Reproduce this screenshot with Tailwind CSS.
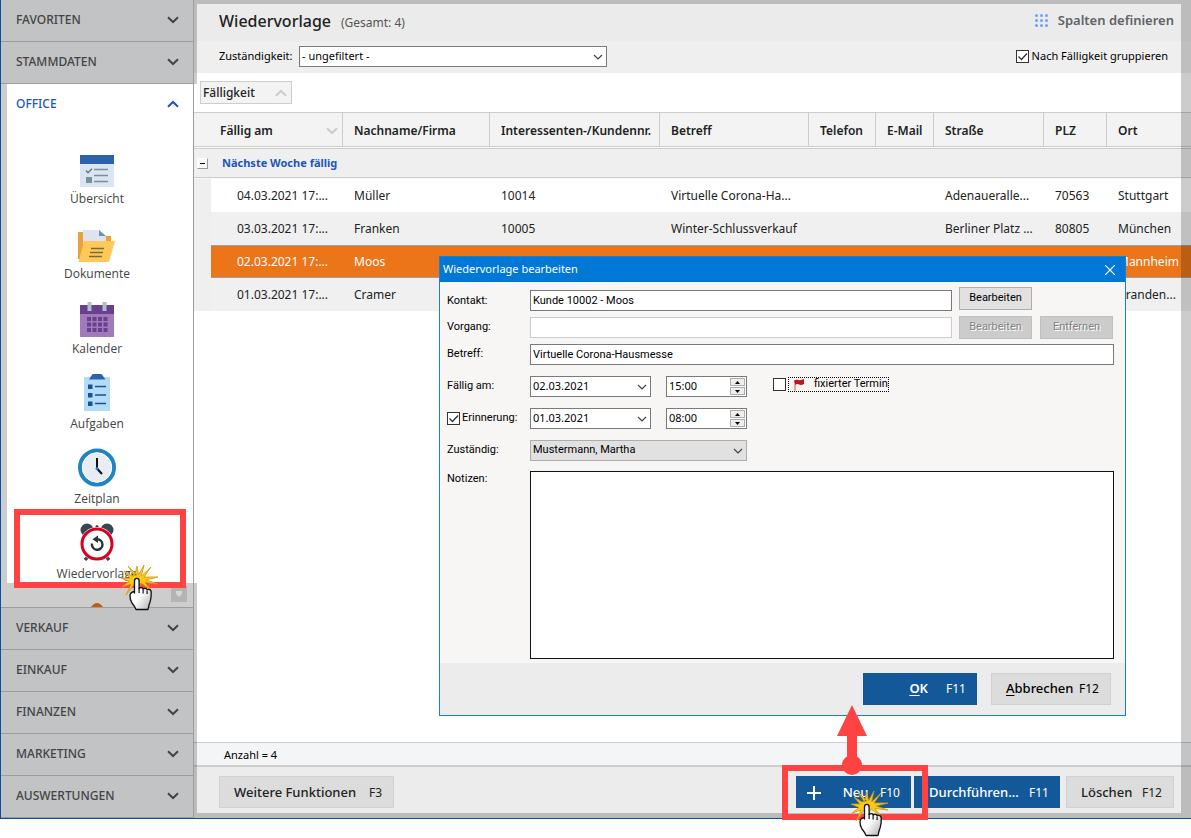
<!DOCTYPE html>
<html lang="de">
<head>
<meta charset="utf-8">
<title>Wiedervorlage</title>
<script src="https://cdn.jsdelivr.net/npm/@tailwindcss/browser@4"></script>
</head>
<body class="h-screen flex flex-col bg-white pb-[19px] overflow-hidden font-['Noto_Sans','Open_Sans',sans-serif] text-[13px] text-[#222]">

<svg class="absolute w-0 h-0" aria-hidden="true">
  <symbol id="down" viewBox="0 0 12 8"><path d="M1 1.2 6 6l5-4.8" fill="none" stroke="currentColor" stroke-width="2"/></symbol>
  <symbol id="up" viewBox="0 0 12 8"><path d="M1 6.8 6 2l5 4.8" fill="none" stroke="currentColor" stroke-width="2"/></symbol>
  <symbol id="thin" viewBox="0 0 10 6"><path d="M1 1l4 4 4-4" fill="none" stroke="currentColor" stroke-width="1.2"/></symbol>
  <symbol id="check" viewBox="0 0 13 13"><path d="M2.5 6.5l3 3 5.5-6" fill="none" stroke="#333" stroke-width="1.3"/></symbol>
  <symbol id="pointer" viewBox="0 0 40 48">
    <path d="M17 11 8 2 14.500 12 17 2 18.500 11 24 1 21.500 12 31 3 24 13 38 13 26 16 38 20 25 18.500 31 26 21 19 18 26 15 19 6 31 11 20 2 23 9 17.500 1 14 10 14 4 7 12 12z" fill="#f8c81c" stroke="#d09a0a" stroke-width=".8"/>
    <path d="M14.500 29V17q0-2.600 2.300-2.600t2.300 2.600v7.600q.3-1 2-1 2 0 2 1.700.4-1 2-1 2 0 2 1.800.3-.8 1.700-.8 2.200 0 2.400 2.600.3 6-1 9.600-1.300 3.300-2.200 8h-12q-1.500-3.500-4-6.500-2.200-3.500-2-7.500.4-3.500 4.500-4z" fill="url(#hand)" stroke="#111" stroke-width="1.300" stroke-linejoin="round"/>
    <path d="M19.100 24v5M23.100 25.500v4M27.100 27v3" stroke="#111" stroke-width="1.200"/>
  </symbol>
  <defs><linearGradient id="hand" x2="1" y2="1"><stop offset=".5" stop-color="#fff"/><stop offset="1" stop-color="#b0b0b0"/></linearGradient></defs>
</svg>

<div class="relative flex flex-1 min-h-0 border-l border-b border-[#0b4ea2]">

  <!-- Navigation -->
  <nav class="w-[193px] shrink-0 flex flex-col border-r border-[#9d9d9d] bg-[#cdcdcd] text-[12px] font-medium text-[#444]">
    <button class="h-[42px] shrink-0 flex items-center justify-between pl-[15px] pr-[14px] pb-[2px] bg-[#c1c3c4] border-b border-[#9b9c9d]">FAVORITEN<svg class="w-3 h-2"><use href="#down"/></svg></button>
    <button class="h-[42px] shrink-0 flex items-center justify-between pl-[15px] pr-[14px] pb-[2px] bg-[#c1c3c4] border-b border-[#9b9c9d]">STAMMDATEN<svg class="w-3 h-2"><use href="#down"/></svg></button>
    <div class="ml-[6px] bg-white shrink-0">
      <button class="w-full h-[39px] flex items-center justify-between pl-[9px] pr-[14px] text-[#1c57b8]">OFFICE<svg class="w-3 h-2"><use href="#up"/></svg></button>
      <div class="pt-[25px] pr-[6px] flex flex-col gap-[13px] font-['Open_Sans','Noto_Sans',sans-serif] font-normal">
        <a href="#" class="flex flex-col items-center">
          <svg class="w-10 h-10" viewBox="0 0 40 40"><path d="M3 7h34v32H3z" fill="#dbe5f1"/><path d="M3 7h34v9H3z" fill="#2b62ab"/><path d="M17 21.500h14M17 27.500h14M17 33.500h14" stroke="#78909c" stroke-width="1.500"/><path d="M9 22.500l2 2.200 4-4" stroke="#607d8b" stroke-width="1.500" fill="none"/><path d="M9 29h6v6H9z" fill="#78909c"/></svg>
          <span class="leading-[22px]">Übersicht</span></a>
        <a href="#" class="flex flex-col items-center">
          <svg class="w-10 h-10" viewBox="0 0 40 40"><path d="M1 9h6v-1h2v28H1zM22 13h12v8H22z" fill="#e9a13b"/><path d="M6 7h16l7 7v10H6z" fill="#dce4f1"/><path d="M22 7l7 6h-7z" fill="#78909c"/><path d="M7 18h31l-6 21H1.500z" fill="#ffc857"/><path d="M14 25.500h13M13 29.500h13M12 33.500h13" stroke="#7a6a3c" stroke-width="1.300"/></svg>
          <span class="leading-[22px]">Dokumente</span></a>
        <a href="#" class="flex flex-col items-center">
          <svg class="w-10 h-10" viewBox="0 0 40 40"><path d="M3 7h34v32H3z" fill="#9f7bb9"/><path d="M3 7h34v9H3z" fill="#6b3f90"/><path d="M10.500 4h4v9h-4zM25.500 4h4v9h-4z" fill="#b0bec5"/><path d="M10 19h4v4h-4zM15.500 19h4v4h-4zM21 19h4v4h-4zM26.500 19h4v4h-4zM10 24.500h4v4h-4zM15.500 24.500h4v4h-4zM21 24.500h4v4h-4zM26.500 24.500h4v4h-4zM10 30h4v4h-4zM15.500 30h4v4h-4zM21 30h4v4h-4zM26.500 30h4v4h-4z" fill="#6b3f90"/></svg>
          <span class="leading-[22px]">Kalender</span></a>
        <a href="#" class="flex flex-col items-center">
          <svg class="w-10 h-10" viewBox="0 0 40 40"><path d="M7 4h26v34H7z" fill="#b3dcf6"/><path d="M12 6.500 15.500 1h9L28.500 6.500z" fill="#2b62ab"/><path d="M11 11.500h4.500V16H11zM11 20h4.500v4.500H11zM11 28.500h4.500V33H11z" fill="#1c4f98"/><path d="M18 13.500h11M18 22h11M18 30.500h11" stroke="#1c4f98" stroke-width="1.500"/></svg>
          <span class="leading-[22px]">Aufgaben</span></a>
        <a href="#" class="flex flex-col items-center">
          <svg class="w-10 h-10" viewBox="0 0 40 40"><circle cx="20" cy="19.500" r="17" fill="#e8edf4" stroke="#1f83c6" stroke-width="4"/><circle cx="20" cy="19.500" r="14.700" fill="none" stroke="#fff" stroke-width="1"/><path d="M20 10v10.500l5 5.500" fill="none" stroke="#111" stroke-width="2"/><circle cx="20" cy="20.500" r="1.500" fill="#1f83c6"/></svg>
          <span class="leading-[22px]">Zeitplan</span></a>
        <a href="#" class="h-15 flex flex-col items-center">
          <svg class="w-10 h-10 shrink-0" viewBox="0 0 40 40"><path d="M8 37l5-6M32 37l-5-6" stroke="#37474f" stroke-width="3.500"/><circle cx="10" cy="7" r="6.500" fill="#37474f"/><circle cx="30" cy="7" r="6.500" fill="#37474f"/><circle cx="20" cy="3.500" r="1.500" fill="#37474f"/><circle cx="20" cy="21" r="17" fill="#fff"/><circle cx="20" cy="21" r="15" fill="#fff" stroke="#d8001f" stroke-width="3"/><path d="M15 20.500a5.300 5.300 0 1 0 5-4.300" fill="none" stroke="#263238" stroke-width="2.400"/><path d="M21 12.500v7.500l-5.500-3.800z" fill="#263238"/></svg>
          <span class="leading-[22px]">Wiedervorlage</span></a>
      </div>
    </div>
    <div class="relative flex-1 min-h-6 overflow-hidden border-b border-[#9b9c9d]">
      <svg class="absolute left-[90px] bottom-0 w-3 h-1" viewBox="0 0 12 4"><path d="M0 4Q3 0 6 0t6 4z" fill="#c45e00"/></svg>
      <button aria-label="Nach unten" class="absolute right-[6px] top-[3px] w-4 h-4 bg-[#b4b4b4] grid place-items-center"><svg class="w-2 h-2" viewBox="0 0 8 8"><path d="M1 1h6v3L4 7 1 4z" fill="#d6d6d6"/></svg></button>
    </div>
    <button class="h-[42px] shrink-0 flex items-center justify-between pl-[15px] pr-[14px] pb-[2px] bg-[#c1c3c4] border-b border-[#9b9c9d]">VERKAUF<svg class="w-3 h-2"><use href="#down"/></svg></button>
    <button class="h-[42px] shrink-0 flex items-center justify-between pl-[15px] pr-[14px] pb-[2px] bg-[#c1c3c4] border-b border-[#9b9c9d]">EINKAUF<svg class="w-3 h-2"><use href="#down"/></svg></button>
    <button class="h-[42px] shrink-0 flex items-center justify-between pl-[15px] pr-[14px] pb-[2px] bg-[#c1c3c4] border-b border-[#9b9c9d]">FINANZEN<svg class="w-3 h-2"><use href="#down"/></svg></button>
    <button class="h-[42px] shrink-0 flex items-center justify-between pl-[15px] pr-[14px] pb-[2px] bg-[#c1c3c4] border-b border-[#9b9c9d]">MARKETING<svg class="w-3 h-2"><use href="#down"/></svg></button>
    <button class="h-[42px] shrink-0 flex items-center justify-between pl-[15px] pr-[14px] pb-[2px] bg-[#c1c3c4] border-b border-[#9b9c9d]">AUSWERTUNGEN<svg class="w-3 h-2"><use href="#down"/></svg></button>
  </nav>

  <!-- List view -->
  <main class="relative flex-1 min-w-0 flex flex-col">
    <header class="h-[41px] flex items-center justify-between pl-[25px] pr-[17px] bg-[#ebebeb]">
      <h1 class="flex items-baseline gap-2.5 text-[16px] font-medium">Wiedervorlage <span class="text-[12px] font-normal text-[#555]">(Gesamt: 4)</span></h1>
      <button class="flex items-center gap-2.5 font-semibold text-[#5f6368]">
        <svg class="w-[13px] h-[13px]" viewBox="0 0 13 13" fill="#69a2f8"><circle cx="1.500" cy="1.500" r="1.500"/><circle cx="6.500" cy="1.500" r="1.500"/><circle cx="11.500" cy="1.500" r="1.500"/><circle cx="1.500" cy="6.500" r="1.500"/><circle cx="6.500" cy="6.500" r="1.500"/><circle cx="11.500" cy="6.500" r="1.500"/><circle cx="1.500" cy="11.500" r="1.500"/><circle cx="6.500" cy="11.500" r="1.500"/><circle cx="11.500" cy="11.500" r="1.500"/></svg>
        Spalten definieren</button>
    </header>
    <div class="h-8 flex items-center pl-[25px] pr-[23px] pb-[2px] bg-[#efefef] text-[11px] text-black">
      <label for="resp" class="w-20">Zuständigkeit:</label>
      <div class="relative w-[308px]">
        <select id="resp" class="block appearance-none w-full h-[21px] pl-[2px] bg-white border border-[#7a7a7a]"><option>- ungefiltert -</option></select>
        <svg class="absolute right-1 top-2 w-[10px] h-[6px] pointer-events-none text-[#444]"><use href="#thin"/></svg>
      </div>
      <label class="ml-auto flex items-center gap-[3px]"><span class="relative"><input type="checkbox" checked class="block appearance-none w-[13px] h-[13px] bg-white border border-[#333]"><svg class="absolute inset-0 w-[13px] h-[13px] pointer-events-none"><use href="#check"/></svg></span>Nach Fälligkeit gruppieren</label>
    </div>
    <div class="h-[39px] flex items-center pl-[6px]">
      <button class="w-[92px] h-[23px] flex items-center justify-between pl-[2px] pr-1 bg-[#f3f3f3] border border-[#cdcdcd] font-medium text-[12px]">Fälligkeit<svg class="w-3 h-2 text-[#ccc]"><use href="#up"/></svg></button>
    </div>
    <div class="flex-1 min-h-0 overflow-hidden">
      <table class="w-full table-fixed border-separate border-spacing-0 text-left text-[12px] whitespace-nowrap">
        <colgroup><col class="w-[17px]"><col class="w-[132px]"><col class="w-[147px]"><col class="w-[170px]"><col class="w-[149px]"><col class="w-[67px]"><col class="w-[58px]"><col class="w-[110px]"><col class="w-[63px]"><col></colgroup>
        <thead><tr class="h-[35px] *:pb-0 *:pt-[2px] *:pr-0 *:pl-[11px] *:font-semibold *:bg-[#f3f3f3] *:border-y *:border-[#cdcdcd]">
          <th colspan="2" class="border-r"><div class="flex items-center justify-between pl-[15px] pr-1">Fällig am<svg class="w-3 h-2 text-[#ccc]"><use href="#down"/></svg></div></th>
          <th class="border-r">Nachname/Firma</th><th class="border-r">Interessenten-/Kundennr.</th><th class="border-r">Betreff</th><th class="border-r">Telefon</th><th class="border-r">E-Mail</th><th class="border-r">Straße</th><th class="border-r">PLZ</th><th>Ort</th>
        </tr></thead>
        <tbody>
          <tr><td colspan="10" class="p-0 py-px bg-[#f8f8f8]"><div class="h-[30px] flex items-center gap-[14px] pl-[3px] bg-[#efefef] border-y border-[#cdcdcd] text-[11px] font-bold text-[#1c57b8]"><button aria-label="Gruppe zuklappen" class="w-[11px] h-[11px] bg-[#f8f8f8] border border-white border-r-[#999] border-b-[#999] grid place-items-center"><span class="w-[5px] h-px bg-black"></span></button>Nächste Woche fällig</div></td></tr>
          <tr class="h-[33px] *:py-0 *:pr-0 *:pl-[11px]"><td class="bg-[#efefef]"></td><td><span class="pl-[15px]">04.03.2021 17:...</span></td><td>Müller</td><td>10014</td><td>Virtuelle Corona-Ha...</td><td></td><td></td><td>Adenaueralle...</td><td>70563</td><td>Stuttgart</td></tr>
          <tr class="h-[33px] bg-[#f0f0f0] *:py-0 *:pr-0 *:pl-[11px]"><td class="bg-[#efefef]"></td><td><span class="pl-[15px]">03.03.2021 17:...</span></td><td>Franken</td><td>10005</td><td>Winter-Schlussverkauf</td><td></td><td></td><td>Berliner Platz ...</td><td>80805</td><td>München</td></tr>
          <tr class="h-[33px] text-white *:py-0 *:pr-0 *:pl-[11px]"><td class="bg-[#efefef]"></td><td class="bg-[#ec751a] border-y border-[#9aa0a6]"><span class="pl-[15px]">02.03.2021 17:...</span></td><td class="bg-[#ec751a] border-y border-[#9aa0a6]">Moos</td><td class="bg-[#ec751a] border-y border-[#9aa0a6]"></td><td class="bg-[#ec751a] border-y border-[#9aa0a6]"></td><td class="bg-[#ec751a] border-y border-[#9aa0a6]"></td><td class="bg-[#ec751a] border-y border-[#9aa0a6]"></td><td class="bg-[#ec751a] border-y border-[#9aa0a6]"></td><td class="bg-[#ec751a] border-y border-[#9aa0a6]"></td><td class="bg-[#ec751a] border-y border-[#9aa0a6]">Mannheim</td></tr>
          <tr class="h-[33px] bg-[#f0f0f0] *:py-0 *:pr-0 *:pl-[11px]"><td class="bg-[#efefef]"></td><td><span class="pl-[15px]">01.03.2021 17:...</span></td><td>Cramer</td><td></td><td></td><td></td><td></td><td></td><td></td><td>Branden...</td></tr>
        </tbody>
      </table>
    </div>
    <div class="h-[25px] flex items-center pt-[2px] pl-[30px] bg-[#f4f5f7] border-t border-b-2 border-[#cdcdcd] text-[11px] text-black">Anzahl = 4</div>
    <footer class="h-[51px] flex items-start pt-[9px] pl-[25px] pr-[17px] bg-[#ececec] font-medium">
      <button class="w-[175px] h-8 flex items-center justify-between pt-[2px] pl-[14px] pr-[11px] bg-[#dcdcdc] border border-[#d0d0d0]">Weitere Funktionen <span class="text-[12px] font-normal">F3</span></button>
      <button class="ml-auto w-[115px] h-8 flex items-center justify-between pt-[2px] px-[11px] bg-[#135899] text-white"><svg class="w-[14px] h-[14px] mr-[10px]" viewBox="0 0 14 14"><path d="M7 0v14M0 7h14" stroke="#fff" stroke-width="2"/></svg>Neu <span class="text-[12px] font-normal">F10</span></button>
      <button class="ml-[3px] w-[146px] h-8 flex items-center justify-between pt-[2px] pl-[15px] pr-[11px] bg-[#135899] text-white">Durchführen... <span class="text-[12px] font-normal">F11</span></button>
      <button class="ml-[6px] w-[108px] h-8 flex items-center justify-between pt-[2px] pl-[14px] pr-[11px] bg-[#dcdcdc] border border-[#d0d0d0]">Löschen <span class="text-[12px] font-normal">F12</span></button>
    </footer>

    <!-- Shaded frame around the highlighted areas -->
    <div class="absolute top-0 left-0 right-[10px] h-1 bg-black/20 pointer-events-none"></div>
    <div class="absolute top-0 right-0 bottom-0 w-[10px] bg-black/20 pointer-events-none"></div>
    <div class="absolute bottom-0 left-0 right-[10px] h-[5px] bg-black/20 pointer-events-none"></div>
    <div class="absolute top-1 left-0 w-[3px] h-20 bg-black/20 pointer-events-none"></div>
    <div class="absolute top-[583px] left-0 w-[3px] bottom-[5px] bg-black/20 pointer-events-none"></div>
  </main>

  <!-- Edit dialog -->
  <section role="dialog" aria-labelledby="dlg" class="absolute left-[438px] right-[65px] top-[256px] border border-[#1a7fd6] bg-[#f7f6f4] text-[11px] text-black">
    <div class="h-[25px] flex items-center justify-between pl-[3px] pr-2.5 bg-[#0078d7] text-white">
      <h2 id="dlg" class="text-[11px]">Wiedervorlage bearbeiten</h2>
      <button aria-label="Schließen"><svg class="w-[10px] h-[10px]" viewBox="0 0 10 10"><path d="M0 0l10 10M10 0 0 10" stroke="#fff" stroke-width="1.200"/></svg></button>
    </div>
    <form class="pt-[5px] pb-1 pl-[7px] pr-[11px] flex flex-col font-['Roboto','Noto_Sans',sans-serif]">
      <div class="flex flex-col gap-[6px]">
        <div class="h-6 flex items-end"><label for="kontakt" class="w-[83px] leading-[21px]">Kontakt:</label><input id="kontakt" value="Kunde 10002 - Moos" class="flex-1 min-w-0 h-[21px] px-[2px] bg-white border border-[#7a7a7a]"><div class="self-start ml-[7px] w-[155px] flex"><button type="button" class="w-[73px] h-[23px] bg-[#e1e1e1] border border-[#adadad]">Bearbeiten</button></div></div>
        <div class="h-[21px] flex items-center"><label for="vorgang" class="w-[83px]">Vorgang:</label><input id="vorgang" disabled class="flex-1 min-w-0 h-[21px] px-[2px] bg-white border border-[#ccc]"><div class="ml-[7px] w-[155px] flex gap-2 text-[#838383]"><button type="button" disabled class="w-[73px] h-[23px] bg-[#ccc] border border-[#bfbfbf] [text-shadow:1px_1px_0_white]">Bearbeiten</button><button type="button" disabled class="w-[73px] h-[23px] bg-[#ccc] border border-[#bfbfbf] [text-shadow:1px_1px_0_white]">Entfernen</button></div></div>
        <div class="h-[21px] flex items-center"><label for="betreff" class="w-[83px]">Betreff:</label><input id="betreff" value="Virtuelle Corona-Hausmesse" class="flex-1 min-w-0 h-[21px] px-[2px] bg-white border border-[#7a7a7a]"></div>
      </div>
      <div class="mt-[11px] flex flex-col gap-[11px]">
        <div class="h-[21px] flex items-center">
          <label for="faellig" class="w-[83px]">Fällig am:</label>
          <div class="w-[121px] h-[21px] flex items-center pr-[3px] bg-white border border-[#7a7a7a]"><input id="faellig" value="02.03.2021" class="flex-1 min-w-0 px-[2px] font-['Noto_Sans',sans-serif]"><button type="button" aria-label="Kalender öffnen"><svg class="w-[10px] h-[6px] text-[#444]"><use href="#thin"/></svg></button></div>
          <div class="ml-[15px] w-[81px] h-[21px] flex items-center pr-px bg-white border border-[#7a7a7a]"><input aria-label="Uhrzeit" value="15:00" class="flex-1 min-w-0 px-[2px] font-['Noto_Sans',sans-serif]"><div class="flex flex-col gap-px"><button type="button" aria-label="Später" class="w-[15px] h-2 grid place-items-center bg-[#eee] border border-[#adadad]"><svg class="w-[5px] h-[3px]" viewBox="0 0 5 3"><path d="M0 3l2.500-3L5 3z"/></svg></button><button type="button" aria-label="Früher" class="w-[15px] h-2 grid place-items-center bg-[#eee] border border-[#adadad]"><svg class="w-[5px] h-[3px]" viewBox="0 0 5 3"><path d="M0 0l2.500 3L5 0z"/></svg></button></div></div>
          <label class="ml-[26px] flex items-center gap-[2px] pb-1"><input type="checkbox" class="block appearance-none w-[13px] h-[13px] bg-white border border-[#333]"><span class="h-[15px] flex items-center gap-[10px] pl-[5px] border border-dotted border-black"><svg class="w-[10px] h-3" viewBox="0 0 10 12"><path d="M1 1.500V12" stroke="#e58a90" stroke-width="1.500"/><path d="M0 1.500Q2 .5 4.500 1T10 0v5Q7 6.500 5 5.500T1.500 6z" fill="#c4131f"/></svg>fixierter Termin</span></label>
        </div>
        <div class="h-[21px] flex items-center">
          <label class="w-[83px] flex items-center gap-[2px]"><span class="relative"><input type="checkbox" checked class="block appearance-none w-[13px] h-[13px] bg-white border border-[#333]"><svg class="absolute inset-0 w-[13px] h-[13px] pointer-events-none"><use href="#check"/></svg></span>Erinnerung:</label>
          <div class="w-[121px] h-[21px] flex items-center pr-[3px] bg-white border border-[#7a7a7a]"><input aria-label="Erinnerungsdatum" value="01.03.2021" class="flex-1 min-w-0 px-[2px] font-['Noto_Sans',sans-serif]"><button type="button" aria-label="Kalender öffnen"><svg class="w-[10px] h-[6px] text-[#444]"><use href="#thin"/></svg></button></div>
          <div class="ml-[15px] w-[81px] h-[21px] flex items-center pr-px bg-white border border-[#7a7a7a]"><input aria-label="Erinnerungszeit" value="08:00" class="flex-1 min-w-0 px-[2px] font-['Noto_Sans',sans-serif]"><div class="flex flex-col gap-px"><button type="button" aria-label="Später" class="w-[15px] h-2 grid place-items-center bg-[#eee] border border-[#adadad]"><svg class="w-[5px] h-[3px]" viewBox="0 0 5 3"><path d="M0 3l2.500-3L5 3z"/></svg></button><button type="button" aria-label="Früher" class="w-[15px] h-2 grid place-items-center bg-[#eee] border border-[#adadad]"><svg class="w-[5px] h-[3px]" viewBox="0 0 5 3"><path d="M0 0l2.500 3L5 0z"/></svg></button></div></div>
        </div>
        <div class="h-[21px] flex items-center">
          <label for="zust" class="w-[83px]">Zuständig:</label>
          <div class="relative w-[217px]"><select id="zust" class="block appearance-none w-full h-[21px] pl-[2px] bg-[#e1e1e1] border border-[#adadad]"><option>Mustermann, Martha</option></select><svg class="absolute right-1 top-2 w-[10px] h-[6px] pointer-events-none text-[#444]"><use href="#thin"/></svg></div>
        </div>
      </div>
      <div class="mt-[10px] flex items-start"><label for="notizen" class="w-[83px]">Notizen:</label><textarea id="notizen" class="block flex-1 h-[188px] resize-none bg-white border border-[#111]"></textarea></div>
    </form>
    <div class="h-[52px] flex items-center justify-end gap-[14px] pr-[14px] bg-[#ececec] text-[13px] font-medium">
      <button class="w-[114px] h-8 flex items-center justify-end gap-[18px] pr-[11px] bg-[#135899] text-white font-semibold"><span><span class="underline underline-offset-2">O</span>K</span> <span class="text-[12px] font-normal">F11</span></button>
      <button class="w-[120px] h-8 flex items-center justify-between pl-[14px] pr-[11px] bg-[#dcdcdc] border border-[#d0d0d0]"><span><span class="underline underline-offset-2">A</span>bbrechen</span> <span class="text-[12px] font-normal">F12</span></button>
    </div>
  </section>

  <!-- Tutorial annotations -->
  <div class="absolute left-[13px] top-[509px] w-[172px] h-[79px] border-6 border-[#ff4343] pointer-events-none"></div>
  <svg class="absolute left-[119px] top-[564px] w-10 h-12 pointer-events-none"><use href="#pointer"/></svg>
  <div class="absolute right-[263px] -bottom-[2px] w-[146px] h-[55px] border-6 border-[#ff4343] pointer-events-none"></div>
  <svg class="absolute right-[324px] bottom-[43px] w-[30px] h-[70px] pointer-events-none" viewBox="0 0 30 70" fill="#ff4343"><path d="M15 0l15 31H20v29H10V31H0z"/><circle cx="15" cy="60" r="10"/></svg>
  <svg class="absolute right-[301px] -bottom-[20px] w-10 h-12 pointer-events-none"><use href="#pointer"/></svg>
</div>
</body>
</html>
